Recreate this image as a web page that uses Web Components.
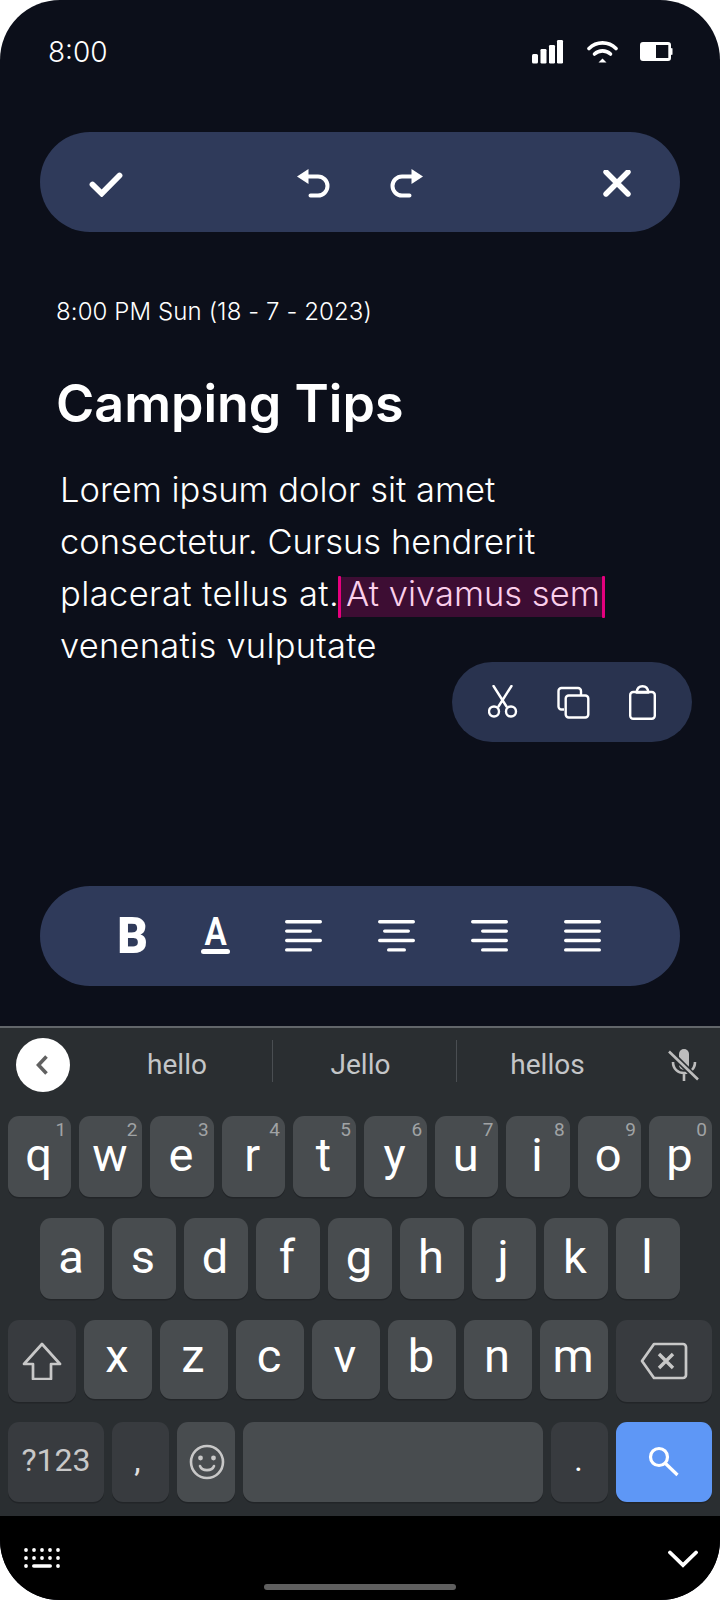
<!DOCTYPE html>
<html lang="en">
<head>
<meta charset="utf-8">
<title>Camping Tips</title>
<style>
    html, body { margin: 0; padding: 0; background: #fff; }
</style>
</head>
<body>
<app-screen>
    <status-bar></status-bar>
    <edit-toolbar></edit-toolbar>
    <note-editor></note-editor>
    <format-toolbar></format-toolbar>
    <soft-keyboard></soft-keyboard>
    <nav-strip></nav-strip>
</app-screen>

<script>
class AppScreen extends HTMLElement {
    constructor() {
        super();
        this.attachShadow({ mode: 'open' });
        this.shadowRoot.innerHTML = `
            <style>
                :host {
                    display: flex;
                    flex-direction: column;
                    width: 720px;
                    height: 1600px;
                    overflow: hidden;
                    border-radius: 60px;
                    background: #0c0f1a;
                    color: #fff;
                    font-family: Inter, "Liberation Sans", sans-serif;
                }
            </style>
            <slot></slot>
        `;
    }
}

class StatusBar extends HTMLElement {
    constructor() {
        super();
        this.attachShadow({ mode: 'open' });
        this.shadowRoot.innerHTML = `
            <style>
                :host {
                    display: flex;
                    justify-content: space-between;
                    align-items: flex-start;
                    box-sizing: border-box;
                    height: 132px;
                    padding: 34px 47px 0 48px;
                }
                .time { font-size: 28px; line-height: 36px; font-weight: 300; }
                .icons { display: flex; align-items: flex-start; padding-top: 6px; }
                svg { display: block; }
            </style>
            <div class="time">8:00</div>
            <div class="icons">
                <svg width="32" height="24" viewBox="0 0 32 24" fill="#fff">
                    <rect x="0" y="14" width="6" height="9.500" rx="1.500"/>
                    <rect x="8.500" y="9" width="6" height="14.500" rx="1.200"/>
                    <rect x="17" y="5" width="6" height="18.500" rx="1.200"/>
                    <rect x="25" y="0" width="6" height="23.500" rx="1.200"/>
                </svg>
                <svg style="margin-left:23px" width="31" height="24" viewBox="0 0 31 24" fill="none" stroke="#fff" stroke-width="3.600" stroke-linecap="round">
                    <path d="M2 8.500C9.500 1 21.500 1 29 8.500"/>
                    <path d="M7.500 14c4.500-4.200 11.500-4.200 16 0"/>
                    <path d="M11.500 21.500L15.500 17.500L19.500 21.500Z" fill="#fff" stroke="none" transform="translate(0 1)"/>
                </svg>
                <svg style="margin-left:22px;margin-top:2px" width="33" height="20" viewBox="0 0 33 20">
                    <path fill-rule="evenodd" fill="#fff" d="M3 0H28a3 3 0 0 1 3 3V16a3 3 0 0 1-3 3H3a3 3 0 0 1-3-3V3a3 3 0 0 1 3-3ZM16 3V16H28.300V3Z"/>
                    <rect x="31" y="6" width="1.500" height="7" rx=".7" fill="#fff"/>
                </svg>
            </div>
        `;
    }
}

class EditToolbar extends HTMLElement {
    constructor() {
        super();
        this.attachShadow({ mode: 'open' });
        this.shadowRoot.innerHTML = `
            <style>
                :host {
                    display: grid;
                    grid-template-columns: 1fr auto 1fr;
                    align-items: center;
                    box-sizing: border-box;
                    flex: none;
                    height: 100px;
                    margin: 0 40px;
                    padding: 3px 46px 0 49px;
                    border-radius: 50px;
                    background: #2f3a5a;
                }
                .mid { display: flex; gap: 60px; margin-left: -3px; }
                .end { justify-self: end; }
                svg { display: block; }
            </style>
            <svg width="34" height="26" viewBox="0 0 34 26" fill="none" stroke="#fff" stroke-width="5.800" stroke-linecap="round">
                <path d="M3.500 13.500L12.700 22.500L30.500 4.500"/>
            </svg>
            <div class="mid">
                <svg width="33" height="30" viewBox="0 0 33 30" fill="none" stroke="#fff" stroke-width="4" stroke-linecap="round">
                    <path d="M0 7.500L11.500 0V15Z" fill="#fff" stroke="none"/>
                    <path d="M10 7.500H21a9.500 9.500 0 0 1 0 19H13.500"/>
                </svg>
                <svg width="33" height="30" viewBox="0 0 33 30" fill="none" stroke="#fff" stroke-width="4" stroke-linecap="round">
                    <path d="M33 7.500L21.500 0V15Z" fill="#fff" stroke="none"/>
                    <path d="M23 7.500H12a9.500 9.500 0 0 0 0 19H19.500"/>
                </svg>
            </div>
            <svg class="end" width="34" height="28" viewBox="0 0 34 28" fill="none" stroke="#fff" stroke-width="5.400" stroke-linecap="round">
                <path d="M6 2L28 24M28 2L6 24"/>
            </svg>
        `;
    }
}

class TextSelection extends HTMLElement {
    constructor() {
        super();
        this.attachShadow({ mode: 'open' });
        this.shadowRoot.innerHTML = `
            <style>
                :host {
                    display: inline-block;
                    position: relative;
                    box-sizing: border-box;
                    height: 40px;
                    line-height: 33px;
                    padding: 0 4px 0 7px;
                    background: #3d0d33;
                    color: #fbcfeb;
                }
                .handle {
                    position: absolute;
                    top: -1px;
                    bottom: -1px;
                    width: 3px;
                    border-radius: 1px;
                    background: #e6007e;
                }
                .l { left: -1px; }
                .r { right: -1px; }
            </style>
            <span class="handle l"></span><slot></slot><span class="handle r"></span>
        `;
    }
}

class ClipboardPopup extends HTMLElement {
    constructor() {
        super();
        this.attachShadow({ mode: 'open' });
        this.shadowRoot.innerHTML = `
            <style>
                :host {
                    position: absolute;
                    right: 28px;
                    top: 430px;
                    display: flex;
                    align-items: center;
                    box-sizing: border-box;
                    width: 240px;
                    height: 80px;
                    padding-left: 36px;
                    gap: 39px;
                    border-radius: 40px;
                    background: #29334f;
                }
                svg { display: block; }
            </style>
            <svg width="30" height="34" viewBox="0 0 30 34" fill="none" stroke="#fff" stroke-width="2.400" stroke-linecap="round">
                <circle cx="6" cy="26.500" r="5"/>
                <circle cx="23" cy="26.500" r="5"/>
                <path d="M5.500 1L18.500 21.500M23.500 1L10.500 21.500"/>
            </svg>
            <svg width="33" height="33" viewBox="0 0 33 33" fill="none" stroke="#fff" stroke-width="2.400" stroke-linejoin="round">
                <path d="M7 23.500H4.500a3 3 0 0 1-3-3V5a3 3 0 0 1 3-3H21a3 3 0 0 1 3 3V9"/>
                <rect x="8.700" y="9.500" width="22.600" height="22" rx="3"/>
            </svg>
            <svg width="27" height="35" viewBox="0 0 27 35" fill="none" stroke="#fff" stroke-width="2.400" stroke-linejoin="round">
                <rect x="1.200" y="7" width="24.600" height="26.800" rx="3"/>
                <path d="M7.500 7.500C8 3.500 10.500 1.200 13.500 1.200S19 3.500 19.500 7.500Z"/>
            </svg>
        `;
    }
}

class NoteEditor extends HTMLElement {
    constructor() {
        super();
        this.attachShadow({ mode: 'open' });
        this.shadowRoot.innerHTML = `
            <style>
                :host {
                    display: block;
                    position: relative;
                    flex: none;
                    box-sizing: border-box;
                    height: 654px;
                    padding: 64px 40px 0 56px;
                }
                .date { font-size: 24px; line-height: 32px; font-weight: 300; letter-spacing: .1px; }
                h1 { margin: 46px 0 0; font-size: 52px; line-height: 60px; font-weight: 600; }
                .body { margin: 30px 0 0 4px; font-size: 34.500px; line-height: 52px; font-weight: 350; }
                .l3 { letter-spacing: .41px; }
                .l4 { letter-spacing: .25px; }
            </style>
            <div class="date">8:00 PM Sun (18 - 7 - 2023)</div>
            <h1>Camping Tips</h1>
            <div class="body">Lorem ipsum dolor sit amet<br>consectetur. Cursus hendrerit<br><span class="l3">placerat tellus at.</span><text-selection>At vivamus sem</text-selection><br><span class="l4">venenatis vulputate</span></div>
            <clipboard-popup></clipboard-popup>
        `;
    }
}

class FormatToolbar extends HTMLElement {
    lines(widths, align) {
        const bars = widths.map((w, i) => {
            const x = align === 'right' ? 37 - w : align === 'center' ? (37 - w) / 2 : 0;
            return `<rect x="${x}" y="${i * 9.4}" width="${w}" height="3.400" rx="1.700"/>`;
        }).join('');
        return `<svg width="37" height="32" viewBox="0 0 37 32" fill="#fff">${bars}</svg>`;
    }

    constructor() {
        super();
        this.attachShadow({ mode: 'open' });
        this.shadowRoot.innerHTML = `
            <style>
                :host {
                    display: flex;
                    justify-content: center;
                    align-items: center;
                    flex: none;
                    gap: 56px;
                    height: 100px;
                    margin: 0 40px 40px;
                    border-radius: 50px;
                    background: #2f3a5a;
                    font-family: Roboto, "Liberation Sans", sans-serif;
                }
                .b {
                    width: 27px;
                    margin-right: -1px;
                    font-size: 50px;
                    line-height: 40px;
                    font-weight: 900;
                    display: flex;
                    justify-content: center;
                    transform: scaleX(.95);
                }
                .a {
                    width: 29px;
                    height: 36px;
                    margin-right: -1px;
                    display: flex;
                    flex-direction: column;
                    align-items: center;
                    justify-content: space-between;
                    font-size: 38px;
                    line-height: 28px;
                    font-weight: 600;
                }
                .a span { transform: scaleX(.88); }
                .a i { display: block; width: 29px; height: 5px; border-radius: 3px; background: #fff; }
                svg { display: block; }
            </style>
            <span class="b">B</span>
            <span class="a"><span>A</span><i></i></span>
            ${this.lines([37, 27, 37, 27], 'left')}
            ${this.lines([37, 27, 37, 19], 'center')}
            ${this.lines([37, 27, 37, 27], 'right')}
            ${this.lines([37, 37, 37, 37], 'left')}
        `;
    }
}

class KbKey extends HTMLElement {
    constructor() {
        super();
        this.attachShadow({ mode: 'open' });
    }

    connectedCallback() {
        const label = this.getAttribute('label') || '';
        const hint = this.getAttribute('hint');
        this.shadowRoot.innerHTML = `
            <style>
                :host {
                    display: flex;
                    justify-content: center;
                    position: relative;
                    box-sizing: border-box;
                    flex: 1 1 0;
                    height: 81px;
                    padding: 14px 2px 0 0;
                    border-radius: 11px;
                    background: #484c4f;
                    box-shadow: 0 1.500px 0 #222528;
                    color: #fff;
                    font-size: 47px;
                    font-weight: 400;
                    line-height: 50px;
                }
                :host([kind="fn"]) { background: #383b3f; color: #c8c8c8; font-size: 32px; }
                :host([kind="go"]) { background: #5e97f6; }
                :host([center]) { align-items: center; padding: 0; }
                .hint {
                    position: absolute;
                    top: 2px;
                    right: 5px;
                    font-size: 19px;
                    line-height: 24px;
                    color: #a0a3a5;
                }
            </style>
            ${label}<slot></slot>${hint ? `<span class="hint">${hint}</span>` : ''}
        `;
    }
}

class SoftKeyboard extends HTMLElement {
    constructor() {
        super();
        this.attachShadow({ mode: 'open' });
    }

    letterRow(letters, hints) {
        return letters.split('').map((c, i) =>
            `<kb-key label="${c}"${hints ? ` hint="${hints[i]}"` : ''}></kb-key>`
        ).join('');
    }

    connectedCallback() {
        this.shadowRoot.innerHTML = `
            <style>
                :host {
                    display: block;
                    flex: none;
                    box-sizing: border-box;
                    height: 490px;
                    border-top: 2px solid #62666a;
                    background: #2a2e31;
                    font-family: Roboto, "Liberation Sans", sans-serif;
                }
                .suggest {
                    display: flex;
                    align-items: center;
                    box-sizing: border-box;
                    height: 88px;
                    padding: 0 20px 14px 16px;
                    color: #c4c6c8;
                    font-size: 28px;
                }
                .back {
                    display: flex;
                    justify-content: center;
                    align-items: center;
                    flex: none;
                    width: 54px;
                    height: 54px;
                    border-radius: 50%;
                    background: #fff;
                }
                .word {
                    flex: none;
                    box-sizing: border-box;
                    height: 42px;
                    margin-bottom: 8px;
                    line-height: 50px;
                    text-align: center;
                }
                .w1 { width: 202px; padding-left: 12px; }
                .w2 { width: 184px; padding-right: 8px; border-left: 1px solid #4a4e52; }
                .w3 { width: 182px; border-left: 1px solid #4a4e52; }
                .mic { flex: none; margin-left: auto; }
                .rows { display: flex; flex-direction: column; gap: 21px; padding: 0 8px; }
                .row { display: flex; gap: 8px; align-items: flex-start; }
                .row.home { padding: 0 32px; }
                .row.third { margin-bottom: -1px; }
                .w68 { flex: 0 0 68px; }
                .low { padding-bottom: 5px; }
                svg { display: block; }
            </style>
            <div class="suggest">
                <div class="back">
                    <svg width="18" height="22" viewBox="0 0 18 22" fill="none" stroke="#616161" stroke-width="3.600">
                        <path d="M12.500 2.500L4.500 11L12.500 19.500"/>
                    </svg>
                </div>
                <div class="word w1">hello</div>
                <div class="word w2">Jello</div>
                <div class="word w3">hellos</div>
                <svg class="mic" width="32" height="34" viewBox="0 0 32 34" fill="none" stroke="#bdbdbd" stroke-width="2.600">
                    <rect x="11" y="1" width="10" height="21" rx="5" fill="#bdbdbd" stroke="none"/>
                    <path d="M5 14c0 7 5 11 11 11s11-4 11-11M16 25v8"/>
                    <path d="M2 4L29 31" stroke="#2a2e31" stroke-width="6"/>
                    <path d="M1 3.500L30 31.500"/>
                </svg>
            </div>
            <div class="rows">
                <div class="row">${this.letterRow('qwertyuiop', '1234567890')}</div>
                <div class="row home">${this.letterRow('asdfghjkl')}</div>
                <div class="row third">
                    <kb-key kind="fn" center class="w68" style="height:82px">
                        <svg width="40" height="38" viewBox="0 0 40 38" fill="none" stroke="#c8c8c8" stroke-width="2.700" stroke-linejoin="round">
                            <path d="M20 2L38 22H29V37H11V22H2Z"/>
                        </svg>
                    </kb-key>
                    ${'xzcvbnm'.split('').map(c => `<kb-key class="w68" label="${c}" style="height:79px;padding-top:11px"></kb-key>`).join('')}
                    <kb-key kind="fn" center style="height:82px">
                        <svg width="48" height="38" viewBox="0 0 48 38" fill="none" stroke="#c8c8c8" stroke-width="2.700" stroke-linejoin="round">
                            <path d="M14 2H43a3 3 0 0 1 3 3V33a3 3 0 0 1-3 3H14L2 19Z"/>
                            <path d="M19 12L33 26M33 12L19 26" stroke-width="3.400"/>
                        </svg>
                    </kb-key>
                </div>
                <div class="row">
                    <kb-key kind="fn" center class="low" label="?123" style="flex:0 0 96px;height:80px"></kb-key>
                    <kb-key kind="fn" center class="low" label="," style="flex:0 0 57px;height:80px;padding-right:6px;color:#e0e0e0"></kb-key>
                    <kb-key center style="flex:0 0 58px;height:80px;padding-left:2px">
                        <svg width="36" height="36" viewBox="0 0 36 36" fill="none" stroke="#c8c8c8" stroke-width="2.600" stroke-linecap="round">
                            <circle cx="18" cy="18" r="16"/>
                            <circle cx="11.500" cy="14" r="2.400" fill="#c8c8c8" stroke="none"/>
                            <circle cx="24.500" cy="14" r="2.400" fill="#c8c8c8" stroke="none"/>
                            <path d="M11 22c2 5.500 12 5.500 14 0"/>
                        </svg>
                    </kb-key>
                    <kb-key style="flex:0 0 300px;height:80px"></kb-key>
                    <kb-key kind="fn" center class="low" label="." style="flex:0 0 57px;height:80px;padding-right:2px;color:#fff"></kb-key>
                    <kb-key kind="go" center style="height:80px">
                        <svg width="34" height="34" viewBox="0 0 34 34" fill="none" stroke="#fff" stroke-width="3.200">
                            <circle cx="12" cy="12" r="8.500"/>
                            <path d="M18 18L30.500 30"/>
                        </svg>
                    </kb-key>
                </div>
            </div>
        `;
    }
}

class NavStrip extends HTMLElement {
    constructor() {
        super();
        this.attachShadow({ mode: 'open' });
        const dots = [];
        [2, 10, 18, 26, 34].forEach(x => {
            dots.push(`<circle cx="${x}" cy="2" r="1.900"/>`);
            dots.push(`<circle cx="${x}" cy="10" r="1.900"/>`);
        });
        this.shadowRoot.innerHTML = `
            <style>
                :host {
                    display: grid;
                    grid-template-columns: 1fr auto;
                    align-items: start;
                    position: relative;
                    box-sizing: border-box;
                    flex: 1;
                    padding: 32px 22px 0 24px;
                    background: #000;
                }
                .pill {
                    position: absolute;
                    left: 264px;
                    bottom: 10px;
                    width: 192px;
                    height: 6px;
                    border-radius: 3px;
                    background: #5f5f5f;
                }
                svg { display: block; }
            </style>
            <svg width="36" height="20" viewBox="0 0 36 20" fill="#fff">
                ${dots.join('')}
                <circle cx="2" cy="18" r="1.900"/>
                <rect x="8" y="16.200" width="20" height="3.600" rx="1.800"/>
                <circle cx="34" cy="18" r="1.900"/>
            </svg>
            <svg style="margin-top:2px" width="30" height="18" viewBox="0 0 30 18" fill="none" stroke="#fff" stroke-width="3.800" stroke-linecap="round">
                <path d="M2 2.500L15 15L28 2.500"/>
            </svg>
            <div class="pill"></div>
        `;
    }
}

customElements.define('text-selection', TextSelection);
customElements.define('clipboard-popup', ClipboardPopup);
customElements.define('kb-key', KbKey);
customElements.define('app-screen', AppScreen);
customElements.define('status-bar', StatusBar);
customElements.define('edit-toolbar', EditToolbar);
customElements.define('note-editor', NoteEditor);
customElements.define('format-toolbar', FormatToolbar);
customElements.define('soft-keyboard', SoftKeyboard);
customElements.define('nav-strip', NavStrip);
</script>
</body>
</html>
